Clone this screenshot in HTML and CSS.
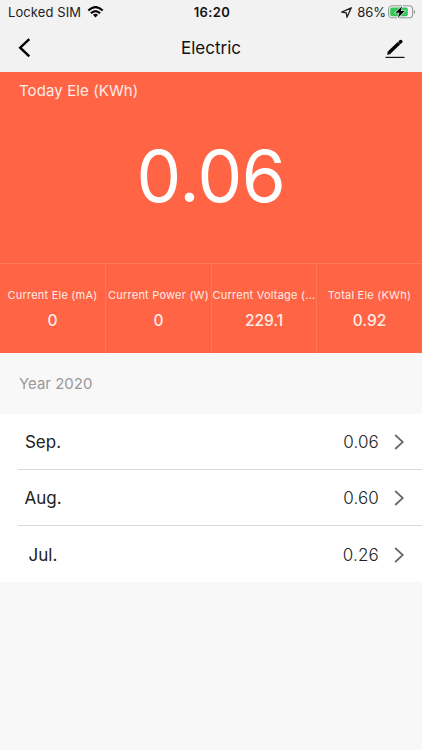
FILE: index.html
```html
<!DOCTYPE html>
<html lang="en">
<head>
<meta charset="utf-8">
<title>Electric</title>
<link rel="stylesheet" href="styles.css">
</head>
<body>
<header class="top">
  <div class="status">
    <div class="carrier"><span class="carrier-name">Locked SIM</span>
      <svg width="17" height="12" viewBox="0 0 16 12"><g fill="none" stroke="#000" stroke-width="2.2"><path d="M.8 4.5Q8-2.3 15.2 4.5M3.4 7.2Q8 2.9 12.6 7.2"/></g><path d="M5.4 8.8Q8 6.7 10.6 8.8L8 11.5z"/></svg>
    </div>
    <span class="clock">16:20</span>
    <div class="power">
      <svg class="locate" width="11" height="11" viewBox="0 0 11 11"><path d="M.7 5.1L10.3.8 6 10.3 5.3 5.8z" fill="none" stroke="#222" stroke-width="1.3" stroke-linejoin="round"/></svg>
      <span class="percent">86%</span>
      <svg class="battery" width="28" height="14" viewBox="0 0 28 14"><rect x=".6" y=".8" width="24" height="12" rx="3.4" fill="none" stroke="#999" stroke-width="1.1"/><rect x="2.2" y="2.4" width="17.6" height="8.8" rx="1.8" fill="#35c759"/><path d="M25.8 5v4q1.4-.6 1.4-2t-1.4-2z" fill="#999"/><path d="M14 1.3L7.3 7.7h4.1L9.9 12.8l6.9-6.7h-4z" fill="#000" stroke="#f2f2f2" stroke-width="1.2" paint-order="stroke"/></svg>
    </div>
  </div>
  <nav class="bar">
    <svg width="14" height="20" viewBox="0 0 14 20"><path d="M11.3 1.2L2.2 9.7l9.1 8.6" fill="none" stroke="#000" stroke-width="2.4"/></svg>
    <h1 class="title">Electric</h1>
    <svg width="20" height="20" viewBox="0 0 20 20"><path d="M4.2 14.5L13.9 5.2" stroke="#000" stroke-width="3.4"/><path d="M2.2 16.8l.6-3.8 3.1 3.1z"/><path d="M15.2 4.1l.6-.6" stroke="#000" stroke-width="3.5" stroke-linecap="round"/><path d="M.5 19.4h19" stroke="#111" stroke-width="1.2"/></svg>
  </nav>
</header>
<section class="today">
  <h2 class="today-label">Today Ele (KWh)</h2>
  <div class="today-value">0.06</div>
</section>
<section class="stats">
  <div class="stat"><div class="stat-label">Current Ele (mA)</div><div class="stat-value">0</div></div>
  <div class="stat"><div class="stat-label">Current Power (W)</div><div class="stat-value">0</div></div>
  <div class="stat"><div class="stat-label">Current Voltage (...</div><div class="stat-value">229.1</div></div>
  <div class="stat"><div class="stat-label">Total Ele (KWh)</div><div class="stat-value">0.92</div></div>
</section>
<h3 class="year">Year 2020</h3>
<main class="months">
  <div class="row"><span class="month">Sep.</span><span class="amount">0.06</span><svg width="11" height="16" viewBox="0 0 11 16"><path d="M1.2 1L8.8 8l-7.6 7" fill="none" stroke="#666" stroke-width="1.7"/></svg></div>
  <div class="row"><span class="month">Aug.</span><span class="amount">0.60</span><svg width="11" height="16" viewBox="0 0 11 16"><path d="M1.2 1L8.8 8l-7.6 7" fill="none" stroke="#666" stroke-width="1.7"/></svg></div>
  <div class="row"><span class="month">Jul.</span><span class="amount">0.26</span><svg width="11" height="16" viewBox="0 0 11 16"><path d="M1.2 1L8.8 8l-7.6 7" fill="none" stroke="#666" stroke-width="1.7"/></svg></div>
</main>
</body>
</html>
```
FILE: styles.css
```css
* { box-sizing: border-box; }
body {
  margin: 0;
  min-height: 750px;
  background: #f8f8f8;
  color: #222;
  font-family: Inter, "Liberation Sans", sans-serif;
}
h1, h2, h3 { margin: 0; font-weight: 400; }
svg { display: block; flex: none; }
.top { height: 72px; background: #f2f2f2; }
.status {
  display: grid;
  grid-template-columns: 1fr auto 1fr;
  align-items: center;
  height: 24px;
  padding: 0 6px 0 8px;
  font-size: 13px;
  line-height: 16px;
}
.carrier { display: flex; align-items: center; gap: 6px; }
.carrier-name { letter-spacing: .1px; }
.clock { font-weight: 600; letter-spacing: .4px; color: #111; }
.power { display: flex; align-items: center; justify-content: flex-end; }
.locate { margin-right: 5px; }
.percent { margin-right: 2px; }
.battery { margin-bottom: 1px; }
.bar {
  display: flex;
  align-items: center;
  justify-content: space-between;
  height: 48px;
  padding: 0 17px 0 18px;
}
.title { padding-left: 5px; font-size: 17px; line-height: 24px; color: #111; }
.today { height: 191px; background: #ff6444; color: #fff; }
.today-label {
  padding: 9px 0 0 19px;
  font-size: 15px;
  line-height: 20px;
  letter-spacing: .1px;
  color: #ffece7;
}
.today-value {
  margin-top: 31px;
  text-align: center;
  font-size: 71px;
  font-weight: 400;
  line-height: 88px;
  letter-spacing: -.4px;
}
.stats {
  display: grid;
  grid-template-columns: 105px 106px 105px 106px;
  height: 90px;
  border-top: 1px solid #ff7b5e;
  background: #ff6444;
  color: #ffece7;
  text-align: center;
}
.stat { padding-top: 23px; min-width: 0; }
.stat + .stat { border-left: 1px solid #ff7658; }
.stat-label { font-size: 11px; line-height: 16px; letter-spacing: .22px; white-space: nowrap; }
.stat-value { margin-top: 8px; font-size: 15.5px; font-weight: 500; line-height: 20px; }
.year {
  height: 61px;
  padding: 21px 0 0 19px;
  font-size: 15px;
  line-height: 20px;
  color: #999;
}
.months { background: #fff; padding-left: 18px; }
.row { display: flex; align-items: center; height: 55px; padding-right: 17px; }
.row + .row { height: 56px; border-top: 1px solid #d9dada; }
.row:last-child { height: 57px; padding-top: 1px; }
.month { width: 50px; text-align: center; font-size: 17px; }
.amount { margin: 0 15px 0 auto; font-size: 17px; font-weight: 300; letter-spacing: .15px; color: #222; }
```
